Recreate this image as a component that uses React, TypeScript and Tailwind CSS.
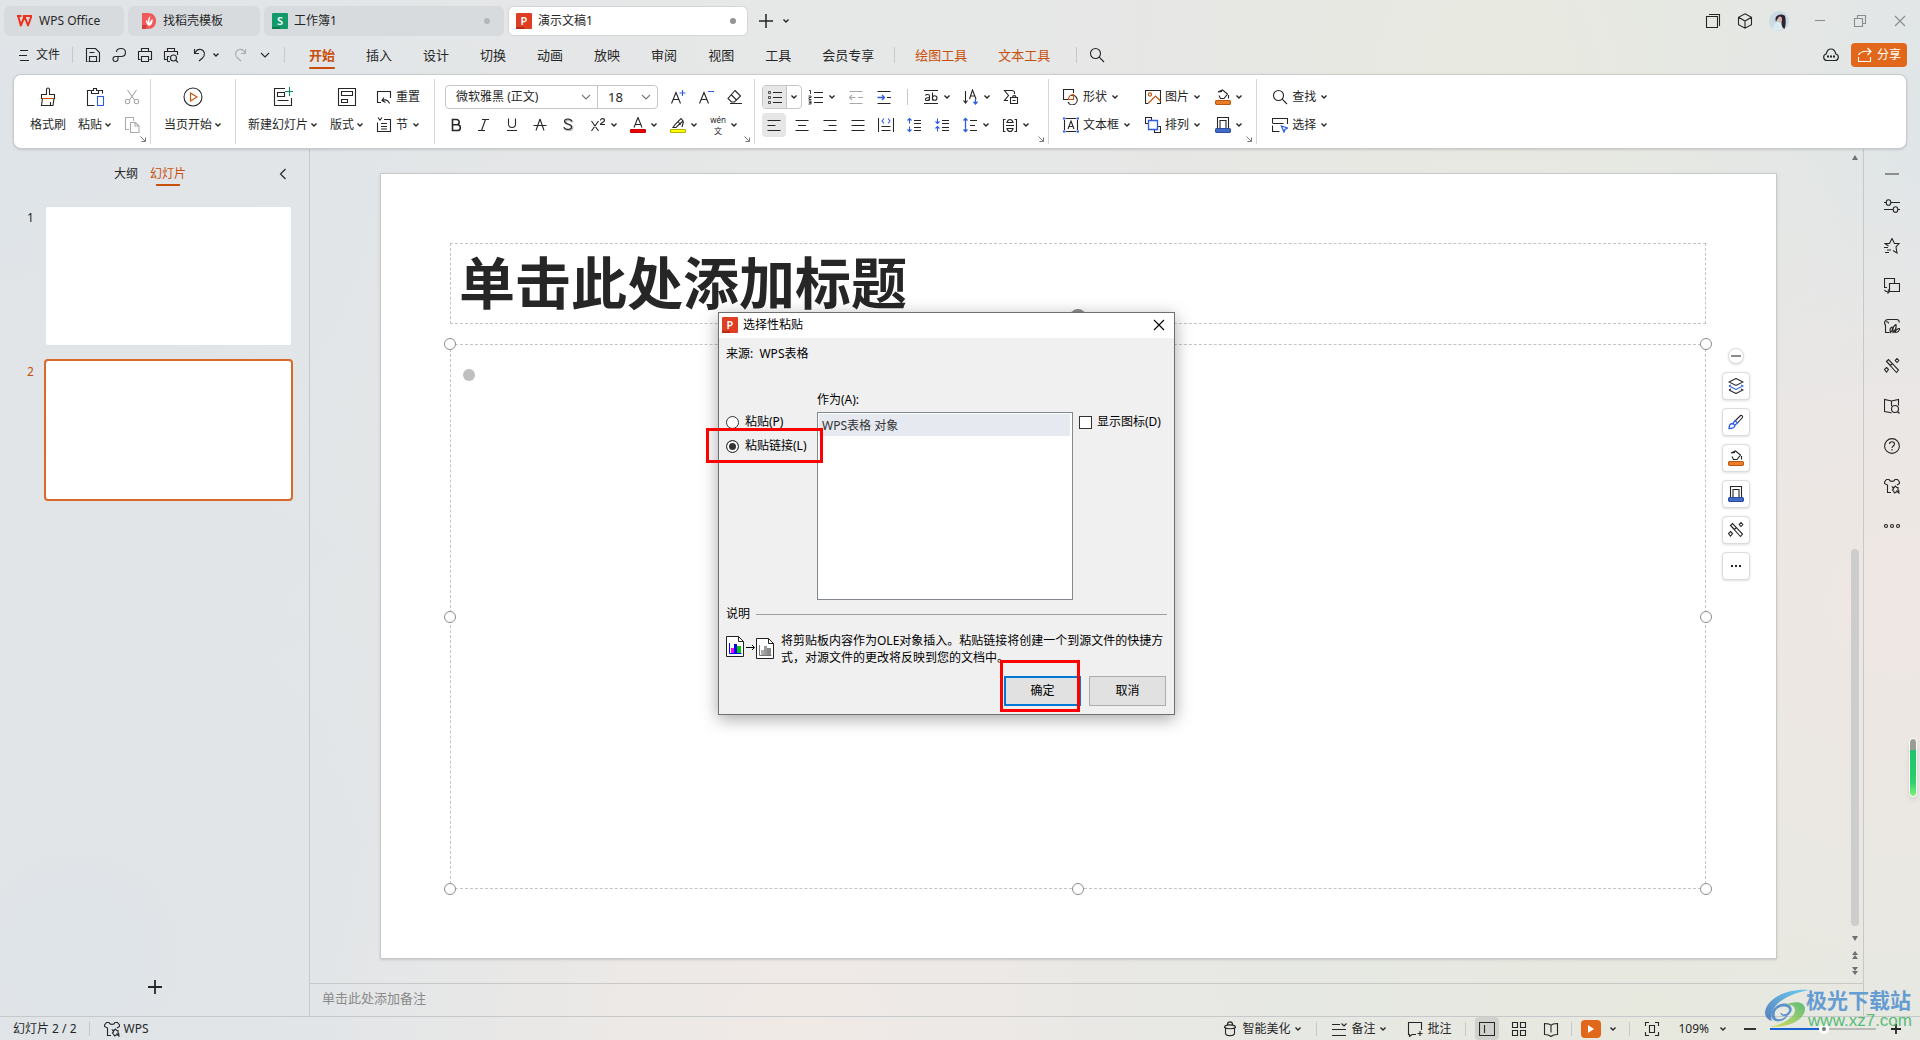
import type { ReactNode } from 'react'
import clsx from 'clsx'

const BLUE = '#2b5ce6'
const ORANGE = '#c8500a'

function Svg({ size = 16, box = 16, children }: { size?: number; box?: number; children: ReactNode }) {
  return (
    <svg
      width={size}
      height={size}
      viewBox={`0 0 ${box} ${box}`}
      fill="none"
      stroke="currentColor"
      strokeWidth="1.1"
      className="shrink-0"
      aria-hidden="true"
    >
      {children}
    </svg>
  )
}

function Caret() {
  return (
    <svg width="8" height="6" viewBox="0 0 8 6" fill="none" stroke="currentColor" strokeWidth="1.4" className="shrink-0">
      <path d="M1.5 1.5 4 4l2.500-2.500" />
    </svg>
  )
}

function Chevron() {
  return (
    <svg width="10" height="6" viewBox="0 0 10 6" fill="none" stroke="currentColor" strokeWidth="1.1" className="shrink-0">
      <path d="M1 1l4 4 4-4" />
    </svg>
  )
}

const icons = {
  save: (
    <Svg>
      <path d="M2.500 14.500h-1V1.500h9l4 4v9h-1M4.500 14.500v-5h7v5M4.500 5.500h5M3.500 14.500h9" />
    </Svg>
  ),
  exportPdf: (
    <Svg>
      <path d="M5.500 5c0-2 1.500-3.500 4.500-3.500s4.500 2 4.500 4-1.500 4-4.500 4H4.500a2.500 2.500 0 1 0 2.500 2.500V9.500" />
    </Svg>
  ),
  print: (
    <Svg>
      <path d="M4.500 4.500v-3h7v3M3.500 12.500h-2v-8h13v8h-2M4.500 9.500h7v5h-7z" />
    </Svg>
  ),
  preview: (
    <Svg>
      <path d="M4.500 4.500v-3h7v3M4 12.500H1.500v-8h13V8M4.500 14.500v-5h2M4.500 14.500H7" />
      <circle cx="10.500" cy="11" r="3" />
      <path d="M12.700 13.200 15 15.500" />
    </Svg>
  ),
  undo: (
    <Svg>
      <path d="M2.500 2v4.500H7M2.500 6.500C4 3.500 6.500 2 9 2.500c4 1 4.500 6 1.500 8.500L7 14" />
    </Svg>
  ),
  redo: (
    <Svg>
      <path d="M13.500 2v4.500H9M13.500 6.500C12 3.500 9.500 2 7 2.500c-4 1-4.500 6-1.500 8.500L9 14" />
    </Svg>
  ),
  search: (
    <Svg>
      <circle cx="6.500" cy="6.500" r="5" />
      <path d="M10.200 10.200 15 15" />
    </Svg>
  ),
  brush: (
    <Svg size={20} box={20}>
      <path d="M8.500 7.500v-5a1.500 1.500 0 0 1 3 0v5h5v4h-13v-4zM4.500 11.500l-1 7h11.500l1-7M12.500 15v3.500" />
      <path d="M4 11.500h12" stroke={ORANGE} />
    </Svg>
  ),
  paste: (
    <Svg size={20} box={20}>
      <path d="M6.500 3.500h-4v15h7M13.500 3.500h4v3M6.500 6.500v-3h2v-2h3v2h2v3z" />
      <path d="M12.500 9.500h6v9h-6z" stroke={BLUE} />
    </Svg>
  ),
  cut: (
    <Svg>
      <path d="M3.500 1l7 10M12.500 1l-7 10" />
      <circle cx="3.500" cy="12.500" r="2.200" />
      <circle cx="12.500" cy="12.500" r="2.200" />
    </Svg>
  ),
  copy: (
    <Svg>
      <path d="M5 12.500H1.500v-12h8V4M6.500 5.500h5l3.500 3.500v6.500H6.500zM11 5.500V9h4" />
    </Svg>
  ),
  play: (
    <Svg size={20} box={20}>
      <circle cx="10" cy="10" r="9" />
      <path d="M7.500 6v8l6.500-4z" stroke={ORANGE} />
    </Svg>
  ),
  newSlide: (
    <Svg size={20} box={20}>
      <path d="M12 1.500H1.500v17h17V11M4.500 5.500h7v4h-7zM4.500 13.500h11" />
      <path d="M16.500 0v9M12 4.500h8" stroke="#0a8a5a" />
    </Svg>
  ),
  layout: (
    <Svg size={20} box={20}>
      <path d="M1.500 1.500h17v17h-17zM4.500 4.500h11v4h-11zM4.500 12.500h6v3h-6z" />
    </Svg>
  ),
  reset: (
    <Svg>
      <path d="M5 13.500H1.500v-11h13V9M8 8.500l-2 3 3.500 2M6 11.500c4-1.500 6-.5 7.500 3" />
    </Svg>
  ),
  section: (
    <Svg>
      <path d="M2 .500 4 3l2-2.500M8 2.500h6.500v12h-13v-9M5 6.500h6M5 9.500h6M5 12h6" />
    </Svg>
  ),
  fontUp: (
    <Svg>
      <path d="M1.500 14.500 6 3.500l4.500 11M3 10.500h6" />
      <path d="M12.500 1v6M9.500 4h6" stroke={BLUE} />
    </Svg>
  ),
  fontDown: (
    <Svg>
      <path d="M1.500 14.500 6 3.500l4.500 11M3 10.500h6" />
      <path d="M10 2.500h6" stroke={BLUE} />
    </Svg>
  ),
  eraser: (
    <Svg>
      <path d="M9 1.500 14.500 7l-6 6H5.500L2 9.500zM5 5.500 10.500 11M4 14.500h12" />
    </Svg>
  ),
  bold: (
    <Svg>
      <path d="M4.500 2.500h4a2.600 2.600 0 0 1 0 5.300h-4zM4.500 7.800h5a2.800 2.800 0 0 1 0 5.700h-5z" strokeWidth="1.600" />
    </Svg>
  ),
  italic: (
    <Svg>
      <path d="M6 2.500h7M2 13.500h7M9.500 2.500l-4 11" />
    </Svg>
  ),
  underline: (
    <Svg>
      <path d="M4.500 1.500v5.500a3.500 3.500 0 0 0 7 0V1.500M3 13.500h10" />
    </Svg>
  ),
  strike: (
    <Svg>
      <path d="M8 2 4 13.500M8 2l4 11.500M1.500 8.500h13" />
    </Svg>
  ),
  shadow: (
    <Svg>
      <path d="M12.500 5.500c0-3-7-3.500-7-.5 0 3.500 7 2 7 5.500 0 3.500-7.500 3.500-7.500.5" stroke="#bbb" strokeWidth="2" />
      <path d="M11.500 4.500c0-3-7-3.500-7-.3 0 3.600 7 2 7 5.600 0 3.500-7.500 3.500-7.500.2" strokeWidth="1.200" />
    </Svg>
  ),
  superscript: (
    <Svg>
      <path d="M1.500 4l7 10M8.500 4l-7 10M10.500 3.500c0-2.500 4-2.500 4 0 0 1.500-4 2.500-4 4H15" />
    </Svg>
  ),
  fontColor: (
    <Svg>
      <path d="M4 10.500 8 .500l4 10M5.500 7.500h5" />
      <rect x="0.500" y="12.500" width="15" height="3" rx="1" fill="#f00000" stroke="#c00000" />
    </Svg>
  ),
  highlight: (
    <Svg>
      <path d="M3 10.500h3l7-6.500-2-2.500L5 7.500zM8.500 5l2 3M13.500 4.500 12 10" />
      <rect x="0.500" y="12.500" width="15" height="3" rx="1" fill="#ffff00" stroke="#b8b000" />
    </Svg>
  ),
  bullets: (
    <Svg>
      <path d="M6 3.500h9M6 8.500h9M6 13.500h9" />
      <path d="M1.500 2.500h2v2h-2zM1.500 7.500h2v2h-2zM1.500 12.500h2v2h-2z" strokeWidth="0.800" />
    </Svg>
  ),
  numbering: (
    <Svg>
      <path d="M6 3.500h9M6 8.500h9M6 13.500h9" />
      <path d="M1 1.500h1.500V5M.5 7h2.500v1.500H1v2h2.500M.5 12h2.500v3H.5M1 13.500h2" strokeWidth="0.900" />
    </Svg>
  ),
  outdent: (
    <Svg>
      <path d="M1.500 2.500h13M1.500 14.500h13M10 8.500h5M1.500 8.500h6M4 6 1.500 8.500 4 11" />
    </Svg>
  ),
  indent: (
    <Svg>
      <path d="M1.500 2.500h13M1.500 14.500h13M11 8.500h4" />
      <path d="M1.500 8.500h7M6 6l2.500 2.500L6 11" stroke={BLUE} strokeWidth="1.300" />
    </Svg>
  ),
  textAb: (
    <Svg>
      <path d="M1 1.500h14M1 14.500h14M2.500 6.500c.5-1.500 4-1.500 4 .5v4.500M6.500 8.500c-5 0-5 3-2.500 3 1.500 0 2.500-1 2.500-2M9.500 3.500v8" />
      <circle cx="11.700" cy="9" r="2.300" />
    </Svg>
  ),
  textDir: (
    <Svg>
      <path d="M2.500 2v12M.5 11.500l2 2.500 2-2.500M6.500 10l3-9 3.500 9M7.500 7h4.500" />
      <path d="M12.500 10v5M10.500 12.800l2 2.200 2-2.200" stroke={BLUE} strokeWidth="1.300" />
    </Svg>
  ),
  smart: (
    <Svg>
      <path d="M11.500 5V3.500c0-1-1-2-3-2h-7l4 5-4 5H5M7.500 8.500h7v6h-7zM9.500 8.500c0-2.500 3.500-2.500 3.500 0M9.500 11.500h3" />
    </Svg>
  ),
  alignLeft: (
    <Svg>
      <path d="M1.500 3.500h13M1.500 8.500h8M1.500 13.500h13" />
    </Svg>
  ),
  alignCenter: (
    <Svg>
      <path d="M1.500 3.500h13M4 8.500h8M1.500 13.500h13" />
    </Svg>
  ),
  alignRight: (
    <Svg>
      <path d="M1.500 3.500h13M6.500 8.500h8M1.500 13.500h13" />
    </Svg>
  ),
  alignJustify: (
    <Svg>
      <path d="M1.500 3.500h13M1.500 8.500h13M1.500 13.500h13" />
    </Svg>
  ),
  distribute: (
    <Svg>
      <path d="M.500 1v14M15.500 1v14M3.500 9.500h9M3.500 13.500h9" />
      <path d="M6 1.500 4 4l2 2.500M10 1.500 12 4l-2 2.500" stroke={BLUE} />
    </Svg>
  ),
  spacingUp: (
    <Svg>
      <path d="M8 3.500h7M8 6.500h7M8 10.500h7M8 13.500h7" />
      <path d="M3.500 6.500v-5M1.500 3.500l2-2 2 2M3.500 9.500v5M1.500 12.500l2 2 2-2" stroke={BLUE} />
    </Svg>
  ),
  spacingDown: (
    <Svg>
      <path d="M8 3.500h7M8 6.500h7M8 10.500h7M8 13.500h7" />
      <path d="M3.500 1.500v5M1.500 4.500l2 2 2-2M3.500 14.500v-5M1.500 11.500l2-2 2 2" stroke={BLUE} />
    </Svg>
  ),
  lineSpacing: (
    <Svg>
      <path d="M8 3.500h7M8 8.500h5M8 13.500h7" />
      <path d="M3.500 1.500v13M1.500 3.500l2-2 2 2M1.500 12.500l2 2 2-2" stroke={BLUE} strokeWidth="1.300" />
    </Svg>
  ),
  vertical: (
    <Svg>
      <path d="M3.500 2.500h-2v12h2M12.500 2.500h2v12h-2M4 8.500h8M5 5.500c1-4 5-4 6 0zM5 11.500c1 4 5 4 6 0z" />
    </Svg>
  ),
  shapes: (
    <Svg>
      <path d="M5 10.500H.500v-10h10V4M8 6.500a4.800 4.800 0 1 1-3 6.500" />
      <path d="M10.500 5.500v5h-5c0-3 2-5 5-5z" stroke={ORANGE} />
    </Svg>
  ),
  textbox: (
    <Svg>
      <path d="M3 1.500h10M3 14.500h10M1.500 3v10M14.500 3v10M5 12 8 4l3 8M6 9.500h4" />
      <path d="M0 1.500h2.500M0 14.500h2.500M13.500 1.500H16M13.500 14.500H16" stroke={BLUE} strokeWidth="2" />
    </Svg>
  ),
  picture: (
    <Svg>
      <path d="M12 14.500h3.500v-13H.500v13H3" />
      <path d="M3 14.500 10.500 7l5 5" stroke={ORANGE} />
      <circle cx="5" cy="5.500" r="1.600" stroke={ORANGE} />
    </Svg>
  ),
  arrange: (
    <Svg>
      <path d="M3 6.500H.500v-6h6V3M9.500 13v2.500h6v-6H13" />
      <path d="M3.500 3.500h9v9h-9z" stroke={BLUE} strokeWidth="1.300" />
    </Svg>
  ),
  fill: (
    <Svg>
      <path d="M3 3 7.500 1l5 4-3.500 4.500H5.500L4 6.500M3 3l4-.500M13.500 6v3.500" />
      <rect x="0.500" y="11.500" width="15" height="4" rx="1.500" fill="#ee7d26" stroke="#b55a14" />
    </Svg>
  ),
  outline: (
    <Svg>
      <path d="M2.500 11V.500h11V11M5 11V3.500h6V11" />
      <rect x="0.500" y="11.500" width="15" height="4" rx="1.500" fill="#3f6ac8" stroke="#2c4f9c" />
    </Svg>
  ),
  select: (
    <Svg>
      <path d="M.500 6V1.500h15V7M.500 6.500h11M7.500 14.500h-7v-6" />
      <path d="M9.500 9l6 2-2.500 1.500-1 2.500z" stroke={BLUE} strokeWidth="1.300" />
    </Svg>
  ),
  sliders: (
    <Svg>
      <path d="M0 4.500h2.500M7 4.500h9M0 11.500h9M14 11.500h2" />
      <ellipse cx="4.500" cy="4.500" rx="2.300" ry="2.800" />
      <ellipse cx="11.500" cy="11.500" rx="2.300" ry="2.800" />
    </Svg>
  ),
  star: (
    <Svg>
      <path d="M4.500 8 1 5.500h4.500L8 .500l2.500 5H15L12 9l1 6-4-2.500M0 9.500h4M3 12h4M1 14.500h4" />
    </Svg>
  ),
  swap: (
    <Svg>
      <path d="M3 9.500H.500v-9h10V5M5.500 5.500h10v8h-10zM.5 12c1 2 2.500 2 4.500 1.500M4 11.500l1.500 2-2 2" />
    </Svg>
  ),
  beautify: (
    <Svg>
      <path d="M5.500 14.500h-4V7C-.5 5 1 1.500 4 1.500h8.500c2 0 3 1.500 2.500 3M4.500 5.500C4.500 4 3.500 3.500 2 4M6.500 14.500c-1-3 0-5 1.500-5.500 1 2 0 4-1.500 5.500zM9 14.500c-.5-4 1-7 3-8 .5 3-.5 6-3 8zM11 14.500c1-3 2.500-4 4.500-4 0 2.500-2 4-4.500 4z" />
    </Svg>
  ),
  wand: (
    <Svg>
      <path d="M2.500 3.500 4.500 1.500 14.500 12l-2 2.500zM2.500 3.500l4 4 2-2" />
      <path d="M13 .500l1.800 2L13 4.500l-1.800-2zM2.500 9.500l2 2-2 2.500-2-2.500z" />
    </Svg>
  ),
  bookSearch: (
    <Svg>
      <path d="M6 14.500 .500 13.500v-12l7 1.500 7-1.500v6M7.500 3v5M6 14.500l1.500.500" />
      <circle cx="11" cy="11" r="3.500" />
      <path d="M13.500 13.500 15.500 15.500" />
    </Svg>
  ),
  help: (
    <Svg>
      <circle cx="8" cy="8" r="7.400" />
      <path d="M5.500 6c0-3 5-3 5 0 0 2-2.500 2-2.500 4M8 11v1.500" />
    </Svg>
  ),
  shirt: (
    <Svg>
      <path d="M7 14.500H3.500V7l-3-1.500V4l2-2.500H5c1 2.500 5 2.500 6 0h2.500l2 2.500v1.500L13 7" />
      <path d="M8.500 9l1.500.500 1.500-1.500 1.200 1.500H14v2l1 1.500-1.500 1-1.500 0-1.500 1-1-2-1-1 1-1zM12.500 12.500l3 3" />
    </Svg>
  ),
  more: (
    <Svg>
      <circle cx="2" cy="8" r="1.500" />
      <circle cx="8" cy="8" r="1.500" />
      <circle cx="14" cy="8" r="1.500" />
    </Svg>
  ),
  layers: (
    <Svg>
      <path d="M8 .500 15 4 8 7.500 1 4zM1 12l7 3.500 7-3.500-2-1M1 12l2-1" />
      <path d="M1 8l7 3.500L15 8l-2-1M1 8l2-1" stroke={BLUE} />
    </Svg>
  ),
  paint: (
    <Svg>
      <path d="M7.500 6.500 12.500 1.500a1.500 1.500 0 0 1 2 2L9.500 9" />
      <path d="M1 14.500C1 10 4 9.500 5 9.500L7 6.500 9.500 9 7 11c0 2-1.500 3.500-6 3.500zM5 9.500 7 11.500" stroke={BLUE} strokeWidth="1.300" />
    </Svg>
  ),
  dots: (
    <Svg>
      <path d="M3 8h2M7 8h2M11 8h2" strokeWidth="2" />
    </Svg>
  ),
  acorn: (
    <Svg>
      <path d="M2.500 6.500c0-3.500 11-3.500 11 0-3 1.500-8 1.500-11 0zM3.500 7v5c0 3.500 9 3.500 9 0V7M5.500 3.500c0-3.500 5-3.500 5 0" />
    </Svg>
  ),
  notes: (
    <Svg>
      <path d="M1 3.500h8M1 8.500h14M1 14.500h14M10.500 2.500 13 5l2.500-2.500" />
    </Svg>
  ),
  comment: (
    <Svg>
      <path d="M9 13.500H5l-2.500 2v-2h-1v-12h13V9M13 10v5M10.500 12.500h5" />
    </Svg>
  ),
  normalView: (
    <Svg>
      <path d="M.500 1.500h15v13H.500zM5.500 4v8" />
    </Svg>
  ),
  gridView: (
    <Svg>
      <path d="M1.500 1.500h5v5h-5zM9.500 1.500h5v5h-5zM1.500 9.500h5v5h-5zM9.500 9.500h5v5h-5z" />
    </Svg>
  ),
  book: (
    <Svg>
      <path d="M8 4.500C7 3 5 2.500 1.500 2.500v11c3 0 5 .5 6.500 2 1.500-1.500 3.500-2 6.500-2v-11C11 2.500 9 3 8 4.500v7" />
    </Svg>
  ),
  fit: (
    <Svg>
      <path d="M1.500 5V1.500H5M11 1.500h3.500V5M14.500 11v3.500H11M5 14.500H1.500V11M5.500 4.500h5v7h-5z" />
    </Svg>
  ),
}

type IconName = keyof typeof icons

const font = "font-['Noto_Sans','Noto_Sans_CJK_SC',sans-serif]"

function Tool({ icon, label, caret, wide, muted }: { icon: IconName; label: string; caret?: boolean; wide?: boolean; muted?: boolean }) {
  return (
    <button
      type="button"
      aria-label={label}
      className={clsx('flex h-6 shrink-0 items-center gap-1 whitespace-nowrap', muted && 'text-[#a9abad]')}
    >
      {icons[icon]}
      {wide && <span>{label}</span>}
      {caret && <Caret />}
    </button>
  )
}

function TallTool({ icon, label, caret }: { icon: IconName; label: string; caret?: boolean }) {
  return (
    <button type="button" className="flex shrink-0 flex-col items-center gap-1">
      <span className="flex h-6 items-center">{icons[icon]}</span>
      <span className="flex h-6 items-center gap-0.5 whitespace-nowrap">
        {label}
        {caret && <Caret />}
      </span>
    </button>
  )
}

function Group({ className, launcher, last, children }: { className?: string; launcher?: boolean; last?: boolean; children: ReactNode }) {
  return (
    <div className={clsx('relative my-1 flex shrink-0 items-start pt-1.5', !last && 'border-r border-[#d6d6d6]', className)}>
      {children}
      {launcher && (
        <svg width="6" height="6" viewBox="0 0 6 6" fill="none" stroke="#777" className="absolute right-1 bottom-0.5">
          <path d="M.5.500l4.500 4.500M5.500 1.500v4h-4" />
        </svg>
      )}
    </div>
  )
}

function Rule({ className }: { className?: string }) {
  return <span className={clsx('w-px shrink-0 bg-[#c6c8ca]', className)} />
}

function AppBadge({ letter, color, dark }: { letter: string; color: string; dark: string }) {
  return (
    <svg width="16" height="16" viewBox="0 0 16 16" className="shrink-0" aria-hidden="true">
      <rect width="16" height="16" rx="1" fill={color} />
      <path d="M0 14h8v2H1a1 1 0 0 1-1-1z" fill={dark} />
      <text x="8" y="12" textAnchor="middle" fontSize="11" fontWeight="600" fill="#fff" fontFamily="Noto Sans">
        {letter}
      </text>
    </svg>
  )
}

function TitleBar() {
  return (
    <header className="flex items-center pt-1.5 pr-3 pl-1">
      <div className="flex h-[30px] gap-1">
        <button type="button" className="flex w-[120px] items-center gap-[7px] rounded-md bg-[#d8dbde] pl-[13px]">
          <svg width="15" height="12" viewBox="0 0 15 12" fill="none" stroke="#f0301c" strokeWidth="2">
            <path d="M0 1.100h4.500M1.200 1l2.600 9.500 3.700-9M6 1.100h8.500L11 10.500 7.500 1.500" strokeLinejoin="round" />
          </svg>
          WPS Office
        </button>
        <button type="button" className="flex w-[132px] items-center gap-[7px] rounded-md bg-[#d8dbde] pl-3.5">
          <svg width="14" height="16" viewBox="0 0 14 16">
            <path d="M0 0h6c5 0 8 3.500 8 8s-3 8-8 8H0z" fill="#f05a5a" />
            <path d="M0 12h5l-1 4H0z" fill="#d43d3d" />
            <path d="M4 7c0 3 1 5 3 6 3-1 4-4 3.500-7C9 7 8 8.500 7.500 10 7 7 8 5 8.500 3 6 4.500 6 6.500 6 9 5.500 8 5 7.300 4 7z" fill="#fff" />
          </svg>
          找稻壳模板
        </button>
        <button type="button" className="flex w-60 items-center gap-1.5 rounded-md bg-[#d8dbde] px-2">
          <AppBadge letter="S" color="#139a6a" dark="#0a7a50" />
          工作簿1
          <span className="mr-1.5 ml-auto size-1.5 rounded-full bg-[#b4b6b8]" />
        </button>
        <button
          type="button"
          className="flex w-60 items-center gap-1.5 rounded-md border border-[#d3d5d7] bg-white px-[7px]"
        >
          <AppBadge letter="P" color="#e03e22" dark="#b52a14" />
          演示文稿1
          <span className="mr-1 ml-auto size-1.5 rounded-full bg-[#929496]" />
        </button>
      </div>
      <button type="button" aria-label="新建标签" className="ml-2.5">
        <Svg>
          <path d="M8 1v14M1 8h14" strokeWidth="1.500" />
        </Svg>
      </button>
      <button type="button" aria-label="标签列表" className="ml-2">
        <Caret />
      </button>

      <div className="ml-auto flex items-center">
        <button type="button" aria-label="窗口">
          <Svg>
            <path d="M1.500 3.500h11v11h-11zM4 1.500h10.500V13" />
          </Svg>
        </button>
        <button type="button" aria-label="应用" className="ml-4">
          <Svg>
            <path d="M8 .800 14.500 4.300v7.400L8 15.200l-6.500-3.500V4.300zM1.500 4.300 8 8l6.500-3.700M8 8v7" />
          </Svg>
        </button>
        <button type="button" aria-label="账户" className="ml-4">
          <svg width="20" height="20" viewBox="0 0 20 20">
            <circle cx="10" cy="10" r="10" fill="#cbd9e3" />
            <path d="M4 19c0-5 2-8 6-8 3 0 3 4 3 8z" fill="#dcebef" />
            <path d="M8 5c2-2 6-2 8 0 1 4 1 9-.5 13-2-1-3-3-3-6L12 7 9.500 7C8.500 7.500 8 9 7 11 6 8 6.500 6 8 5z" fill="#2c2430" />
            <ellipse cx="11" cy="8.500" rx="2" ry="3" fill="#dcb3a8" />
          </svg>
        </button>
        <div className="ml-[23px] flex gap-6 text-[#8a8c8e]">
          <button type="button" aria-label="最小化">
            <Svg>
              <path d="M3 7.500h10" />
            </Svg>
          </button>
          <button type="button" aria-label="还原">
            <Svg>
              <path d="M2.500 5.500h8v8h-8zM5.500 5.500v-3h8v8h-3" />
            </Svg>
          </button>
          <button type="button" aria-label="关闭">
            <Svg>
              <path d="M3 3l10 10M13 3 3 13" />
            </Svg>
          </button>
        </div>
      </div>
    </header>
  )
}

const menus = ['插入', '设计', '切换', '动画', '放映', '审阅', '视图', '工具', '会员专享']

function MenuBar() {
  return (
    <nav className="flex h-[38px] items-center pr-[13px] pl-[19px]">
      <button type="button" className="flex items-center gap-[7px]">
        <svg width="10" height="12" viewBox="0 0 10 12" stroke="currentColor" fill="none">
          <path d="M1 1.500h8M0 6.500h8M1 11.500h9" />
        </svg>
        文件
      </button>
      <Rule className="mx-3 h-4" />
      <div className="flex gap-2.5">
        <Tool icon="save" label="保存" />
        <Tool icon="exportPdf" label="输出为PDF" />
        <Tool icon="print" label="打印" />
        <Tool icon="preview" label="打印预览" />
      </div>
      <div className="ml-[13px] flex gap-3">
        <Tool icon="undo" label="撤销" caret />
        <Tool icon="redo" label="恢复" muted />
        <button type="button" aria-label="自定义">
          <Chevron />
        </button>
      </div>
      <Rule className="mr-6 ml-3.5 h-4" />
      <div className="flex gap-[31px] text-[13px]">
        <button type="button" className="relative h-6 font-bold text-[#c8500a]">
          开始
          <span className="absolute inset-x-0 -bottom-0.5 h-0.5 rounded-full bg-[#c8500a]" />
        </button>
        {menus.map((m) => (
          <button key={m} type="button">
            {m}
          </button>
        ))}
      </div>
      <Rule className="mx-5 h-4" />
      <div className="flex gap-[31px] text-[13px] text-[#c8500a]">
        <button type="button">绘图工具</button>
        <button type="button">文本工具</button>
      </div>
      <Rule className="mr-3 ml-[26px] h-4" />
      <Tool icon="search" label="搜索" />

      <button type="button" aria-label="云同步" className="mr-3 ml-auto">
        <Svg>
          <path d="M4 13.500A3.300 3.300 0 0 1 3.200 7C4 3.500 6 2 8 2s4 1.500 4.800 5a3.300 3.300 0 0 1-.8 6.500z" strokeWidth="1.200" />
          <path d="M4 9.500h2M7 9.500h2M10 9.500h2" strokeWidth="1.800" />
        </Svg>
      </button>
      <button type="button" className="flex h-6 w-14 items-center justify-center gap-1 rounded bg-[#e1681a] text-white">
        <Svg>
          <path d="M1.500 10v4.500h12V10M1.500 8C3 5 6 3.500 13.500 4.500M10.500 1l3.500 3.500L10.500 8" />
        </Svg>
        分享
      </button>
    </nav>
  )
}

function Ribbon() {
  return (
    <div className="relative z-10 mx-[13px] flex h-[75px] overflow-hidden rounded-lg border border-[#c9cbcc] bg-white shadow">
      <Group className="gap-3 pr-2.5 pl-4" launcher>
        <TallTool icon="brush" label="格式刷" />
        <TallTool icon="paste" label="粘贴" caret />
        <div className="flex flex-col gap-1">
          <Tool icon="cut" label="剪切" muted />
          <Tool icon="copy" label="复制" muted />
        </div>
      </Group>

      <Group className="px-[13px]">
        <TallTool icon="play" label="当页开始" caret />
      </Group>

      <Group className="gap-3 pr-3.5 pl-3">
        <TallTool icon="newSlide" label="新建幻灯片" caret />
        <TallTool icon="layout" label="版式" caret />
        <div className="flex flex-col gap-1">
          <Tool icon="reset" label="重置" wide />
          <Tool icon="section" label="节" wide caret />
        </div>
      </Group>

      <Group className="w-[320px] pl-2.5" launcher>
        <div className="flex flex-col gap-1">
          <div className="flex h-6 items-center">
            <div className="flex h-6 items-center rounded border border-[#c4c6c8]">
              <label className="relative flex w-[151px] items-center">
                <select aria-label="字体" className="w-full appearance-none pl-2.5">
                  <option>微软雅黑 (正文)</option>
                </select>
                <span className="pointer-events-none absolute right-1.5 text-[#777]">
                  <Chevron />
                </span>
              </label>
              <label className="relative flex h-full w-[60px] items-center border-l border-[#c4c6c8]">
                <select aria-label="字号" className="w-full appearance-none pl-2.5 text-[13px]">
                  <option>18</option>
                </select>
                <span className="pointer-events-none absolute right-1.5 text-[#777]">
                  <Chevron />
                </span>
              </label>
            </div>
            <div className="ml-3 flex gap-3">
              <Tool icon="fontUp" label="增大字号" />
              <Tool icon="fontDown" label="减小字号" />
              <Tool icon="eraser" label="清除格式" />
            </div>
          </div>
          <div className="flex pl-[3px]">
            <div className="flex gap-3">
              <Tool icon="bold" label="加粗" />
              <Tool icon="italic" label="倾斜" />
              <Tool icon="underline" label="下划线" />
              <Tool icon="strike" label="删除线" />
              <Tool icon="shadow" label="阴影" />
            </div>
            <div className="ml-3.5 flex gap-3">
              <Tool icon="superscript" label="上标" caret />
              <Tool icon="fontColor" label="字体颜色" caret />
              <Tool icon="highlight" label="突出显示" caret />
              <button type="button" aria-label="拼音指南" className="flex h-6 items-center gap-1">
                <span className="flex w-4 flex-col items-center text-[8px] leading-[11px]">
                  <span>wén</span>
                  <span>文</span>
                </span>
                <Caret />
              </button>
            </div>
          </div>
        </div>
      </Group>

      <Group className="w-[294px] pl-[7px]" launcher>
        <div className="flex flex-col gap-1">
          <div className="flex gap-3">
            <div className="flex gap-1.5">
              <div className="flex h-6 rounded border border-[#c4c6c8]">
                <button type="button" aria-label="项目符号" className="flex w-[23px] items-center justify-center rounded-l bg-[#e6e6e6]">
                  {icons.bullets}
                </button>
                <button type="button" aria-label="项目符号选项" className="flex w-[15px] items-center justify-center border-l border-[#c4c6c8]">
                  <Caret />
                </button>
              </div>
              <Tool icon="numbering" label="编号" caret />
            </div>
            <Tool icon="outdent" label="减少缩进" muted />
            <Tool icon="indent" label="增加缩进" />
            <Rule className="mx-[3px] my-1" />
            <Tool icon="textAb" label="字符边距" caret />
            <Tool icon="textDir" label="文字方向" caret />
            <Tool icon="smart" label="转智能图形" />
          </div>
          <div className="flex gap-3">
            <button type="button" aria-label="左对齐" className="-mr-1 flex size-6 items-center justify-center rounded bg-[#e6e6e6]">
              {icons.alignLeft}
            </button>
            <Tool icon="alignCenter" label="居中" />
            <Tool icon="alignRight" label="右对齐" />
            <Tool icon="alignJustify" label="两端对齐" />
            <Tool icon="distribute" label="分散对齐" />
            <Tool icon="spacingUp" label="增大段距" />
            <Tool icon="spacingDown" label="减小段距" />
            <Tool icon="lineSpacing" label="行距" caret />
            <Tool icon="vertical" label="对齐文本" caret />
          </div>
        </div>
      </Group>

      <Group className="gap-3.5 pr-[13px] pl-3.5" launcher>
        <div className="flex flex-col gap-1">
          <Tool icon="shapes" label="形状" wide caret />
          <Tool icon="textbox" label="文本框" wide caret />
        </div>
        <div className="flex flex-col gap-1">
          <Tool icon="picture" label="图片" wide caret />
          <Tool icon="arrange" label="排列" wide caret />
        </div>
        <div className="flex flex-col gap-1">
          <Tool icon="fill" label="填充" caret />
          <Tool icon="outline" label="轮廓" caret />
        </div>
      </Group>

      <Group className="pl-[15px]" last>
        <div className="flex flex-col gap-1">
          <Tool icon="search" label="查找" wide caret />
          <Tool icon="select" label="选择" wide caret />
        </div>
      </Group>
    </div>
  )
}

function SlidePane() {
  return (
    <aside className="flex w-[310px] shrink-0 flex-col border-r border-[#c6c8ca]">
      <div className="mt-[13px] flex h-6 items-center gap-3 pr-[22px] pl-[114px]">
        <button type="button">大纲</button>
        <button type="button" className="relative flex h-6 items-center text-[#c8500a]">
          幻灯片
          <span className="absolute inset-x-1.5 bottom-0 h-0.5 bg-[#c8500a]" />
        </button>
        <button type="button" aria-label="收起" className="ml-auto">
          <svg width="8" height="12" viewBox="0 0 8 12" fill="none" stroke="currentColor" strokeWidth="1.200">
            <path d="M6.500 1 1.500 6l5 5" />
          </svg>
        </button>
      </div>
      <ol className="mt-[19px] flex flex-col gap-3 pr-4">
        {[1, 2].map((n) => (
          <li key={n} className={clsx('flex', n === 2 && 'text-[#c8500a]')}>
            <span className="w-11 pt-1 pl-[27px]">{n}</span>
            <button
              type="button"
              aria-label={`幻灯片 ${n}`}
              className={clsx(
                'aspect-[249/142] flex-1 rounded border-2 bg-white bg-clip-padding',
                n === 2 ? 'border-[#d9692a]' : 'border-transparent'
              )}
            />
          </li>
        ))}
      </ol>
      <button type="button" aria-label="新建幻灯片" className="mt-auto flex h-[58px] items-center justify-center">
        <Svg>
          <path d="M8 1v14M1 8h14" strokeWidth="1.800" />
        </Svg>
      </button>
    </aside>
  )
}

function Handle({ className }: { className: string }) {
  return <span className={clsx('absolute size-3 rounded-full border border-[#8c8c8c] bg-white', className)} />
}

const quickTools: IconName[] = ['layers', 'paint', 'fill', 'outline', 'wand', 'dots']
const quickLabels = ['图层', '样式', '填充', '轮廓', '美化', '更多']

function Slide() {
  return (
    <section className="relative flex flex-1 flex-col gap-5 border border-[#c8c9ca] bg-white py-[69px] pr-[70px] pl-[69px] shadow-sm">
      <div className="flex h-[81px] shrink-0 items-center border border-dashed border-[#c4c4c4] pb-1 pl-2">
        <h1 className="text-[56px] leading-none font-bold whitespace-nowrap text-[#262626]">单击此处添加标题</h1>
      </div>
      <div className="relative flex-1 border border-dashed border-[#c4c4c4] pt-6 pl-3">
        <span className="block size-3 rounded-full bg-[#bfbfbf]" />
        <span className="absolute -top-9 left-1/2 -ml-2 size-4 rounded-full bg-[#8c8c8c]" />
        <Handle className="-top-[7px] -left-[7px]" />
        <Handle className="-top-[7px] -right-[7px]" />
        <Handle className="top-1/2 -left-[7px] -mt-1.5" />
        <Handle className="top-1/2 -right-[7px] -mt-1.5" />
        <Handle className="-bottom-[7px] -left-[7px]" />
        <Handle className="-right-[7px] -bottom-[7px]" />
        <Handle className="-bottom-[7px] left-1/2 -ml-1.5" />
      </div>
      {/* floating quick tools next to the placeholder */}
      <div className="absolute top-[174px] right-[26px] flex flex-col items-center gap-2">
        <button
          type="button"
          aria-label="收起工具"
          className="flex size-4 items-center justify-center rounded-full border border-[#dcdcdc] bg-white shadow"
        >
          <span className="h-0.5 w-2.5 bg-[#8a8a8a]" />
        </button>
        {quickTools.map((t, i) => (
          <button
            key={t}
            type="button"
            aria-label={quickLabels[i]}
            className="flex size-7 items-center justify-center rounded border border-[#dcdcdc] bg-white shadow"
          >
            {icons[t]}
          </button>
        ))}
      </div>
    </section>
  )
}

function ScrollBar() {
  return (
    <div className="flex w-[18px] flex-col items-center pl-0.5">
      <svg width="6" height="5" viewBox="0 0 6 5" className="mt-1.5" fill="#6e7072">
        <path d="M3 0l3 5H0z" />
      </svg>
      <div className="mt-[389px] w-2 flex-1 rounded-full bg-[#cdcecb]" />
      <svg width="6" height="5" viewBox="0 0 6 5" className="mt-2.5" fill="#6e7072">
        <path d="M3 5 0 0h6z" />
      </svg>
      <svg width="6" height="8" viewBox="0 0 6 8" className="mt-2.5" fill="#6e7072">
        <path d="M3 0l3 4H0zM3 4l3 4H0z" />
      </svg>
      <svg width="6" height="8" viewBox="0 0 6 8" className="mt-2 mb-2" fill="#6e7072">
        <path d="M3 4 0 0h6zM3 8 0 4h6z" />
      </svg>
    </div>
  )
}

const sideTools: [IconName, string][] = [
  ['sliders', '属性'],
  ['star', '动画'],
  ['swap', '切换'],
  ['beautify', '美化'],
  ['wand', '魔法'],
  ['bookSearch', '素材'],
  ['help', '帮助'],
  ['shirt', '皮肤'],
  ['more', '更多'],
]

function SideBar() {
  return (
    <aside className="flex w-[57px] shrink-0 flex-col items-center gap-6 border-l border-[#c6c8ca] pt-6">
      <span className="-mb-px h-0.5 w-3.5 bg-[#8c8e90]" />
      {sideTools.map(([icon, label]) => (
        <button key={icon} type="button" aria-label={label}>
          {icons[icon]}
        </button>
      ))}
    </aside>
  )
}

function ChartPage({ x, bars }: { x: number; bars: string[] }) {
  return (
    <g>
      <path d={`M${x + 0.5} .5h12l5 5v15h-17z`} fill="#fff" stroke="#222" />
      <path d={`M${x + 12.5} .5v5h5`} fill="none" stroke="#222" />
      <path d={`M${x + 3.5} 7v10.500h12`} fill="none" stroke={bars[3]} />
      <rect x={x + 5} y="12" width="3" height="5" fill={bars[0]} />
      <rect x={x + 8} y="8" width="3" height="9" fill={bars[1]} />
      <rect x={x + 11} y="10" width="4" height="7" fill={bars[2]} />
    </g>
  )
}

function PasteSpecialDialog() {
  return (
    <div
      role="dialog"
      aria-label="选择性粘贴"
      className="absolute top-[312px] left-[718px] z-20 w-[457px] border border-[#6f6f6f] bg-[#f0f0f0] text-black shadow-[0_4px_16px_rgba(0,0,0,0.35)]"
    >
      <div className="flex h-[25px] items-center bg-white pr-2 pb-px pl-[3px]">
        <AppBadge letter="P" color="#e03e22" dark="#b52a14" />
        <h2 className="ml-[5px]">选择性粘贴</h2>
        <button type="button" aria-label="关闭" className="ml-auto">
          <Svg size={14} box={14}>
            <path d="M2 2l10 10M12 2 2 12" />
          </Svg>
        </button>
      </div>

      <div className="px-[7px] pt-[7px] pb-2">
        <p>来源:&nbsp; WPS表格</p>

        <div className="mt-7 flex">
          <fieldset className="flex w-[91px] flex-col pt-[19px]">
            <label className="flex h-6 items-center gap-1.5 whitespace-nowrap">
              <input
                type="radio"
                name="mode"
                className="size-[13px] shrink-0 appearance-none rounded-full border border-[#333] bg-white checked:bg-[#333] checked:shadow-[inset_0_0_0_2px_#fff]"
              />
              粘贴(P)
            </label>
            <label className="flex h-6 items-center gap-1.5 whitespace-nowrap">
              <input
                type="radio"
                name="mode"
                defaultChecked
                className="size-[13px] shrink-0 appearance-none rounded-full border border-[#333] bg-white checked:bg-[#333] checked:shadow-[inset_0_0_0_2px_#fff]"
              />
              粘贴链接(L)
            </label>
          </fieldset>
          <div className="w-64">
            <p id="paste-as">作为(A):</p>
            <div
              role="listbox"
              aria-labelledby="paste-as"
              className="mt-[3px] h-[188px] border border-[#828790] bg-white p-px pr-0.5"
            >
              <button
                type="button"
                role="option"
                aria-selected="true"
                className="flex h-[22px] w-full items-center bg-[#e6e9ef] pt-px pl-[3px] text-[#333]"
              >
                WPS表格 对象
              </button>
            </div>
          </div>
          <label className="mt-[19px] ml-1.5 flex h-6 items-center gap-[5px] whitespace-nowrap">
            <input type="checkbox" className="size-[13px] shrink-0 appearance-none border border-[#333] bg-white" />
            显示图标(D)
          </label>
        </div>

        <div className="mt-[5px] flex items-center gap-1.5">
          <h3>说明</h3>
          <hr className="flex-1 border-[#a0a0a0]" />
        </div>

        <div className="mt-[9px] flex gap-1.5">
          <svg width="49" height="24" viewBox="0 0 49 24" className="mt-1 shrink-0">
            <ChartPage x={0} bars={['#f0f', '#00f', '#0c0', '#00f']} />
            <path d="M20 11.500h8M26 9l2.500 2.500L26 14" fill="none" stroke="#000" />
            <g transform="translate(0 2)">
              <ChartPage x={30} bars={['#aaa', '#999', '#888', '#777']} />
            </g>
          </svg>
          <p className="leading-[17px]">
            将剪贴板内容作为OLE对象插入。粘贴链接将创建一个到源文件的快捷方式，对源文件的更改将反映到您的文档中。
          </p>
        </div>

        <div className="mt-2.5 flex justify-end gap-2 pr-px">
          <button type="button" className="h-[30px] w-[77px] border-2 border-[#0078d7] bg-[#e1e1e1]">
            确定
          </button>
          <button type="button" className="h-[30px] w-[77px] border border-[#adadad] bg-[#e1e1e1]">
            取消
          </button>
        </div>
      </div>

      {/* red marks round the two steps */}
      <span className="absolute top-[115px] -left-[13px] h-[35px] w-[117px] border-3 border-[#f00]" />
      <span className="absolute right-[94px] bottom-0.5 h-[52px] w-20 border-3 border-[#f00]" />
    </div>
  )
}

function StatusBar() {
  return (
    <footer className="flex h-6 items-center border-t border-[#c6c8ca] pr-[18px] pl-[13px]">
      <span>幻灯片 2 / 2</span>
      <Rule className="mr-3.5 ml-3 h-3.5" />
      <Tool icon="shirt" label="WPS" wide />

      <div className="ml-auto flex h-full items-center">
        <Tool icon="acorn" label="智能美化" wide caret />
        <Rule className="mx-3.5 h-3.5" />
        <Tool icon="notes" label="备注" wide caret />
        <span className="w-5" />
        <Tool icon="comment" label="批注" wide />
        <Rule className="mr-[9px] ml-3.5 h-3.5" />
        <button type="button" aria-label="普通视图" className="flex h-full w-6 items-center justify-center rounded bg-[#d0d1cd]">
          {icons.normalView}
        </button>
        <div className="mx-3 flex gap-4">
          <Tool icon="gridView" label="幻灯片浏览" />
          <Tool icon="book" label="阅读视图" />
        </div>
        <Rule className="mr-[9px] h-3.5" />
        <button type="button" aria-label="放映" className="mr-2 flex h-[18px] w-5 items-center justify-center rounded-sm bg-[#e1681a]">
          <svg width="6" height="8" viewBox="0 0 6 8" fill="#fff">
            <path d="M0 0l6 4-6 4z" />
          </svg>
        </button>
        <Caret />
        <Rule className="mr-3.5 ml-3 h-3.5" />
        <Tool icon="fit" label="最佳显示比例" />
        <button type="button" className="ml-[18px] flex items-center gap-2.5">
          109%
          <Caret />
        </button>
        <button type="button" aria-label="缩小" className="ml-[17px] h-0.5 w-3 bg-[#333]" />
        <input
          type="range"
          aria-label="显示比例"
          defaultValue={51}
          className="mx-3.5 h-0.5 w-[106px] appearance-none bg-[linear-gradient(to_right,#1a62d2_50%,#b9bbb8_50%)] [&::-webkit-slider-thumb]:size-2.5 [&::-webkit-slider-thumb]:appearance-none [&::-webkit-slider-thumb]:rounded-full [&::-webkit-slider-thumb]:border-3 [&::-webkit-slider-thumb]:border-white [&::-webkit-slider-thumb]:bg-[#777]"
        />
        <button type="button" aria-label="放大">
          <Svg size={12} box={12}>
            <path d="M6 1v10M1 6h10" strokeWidth="1.800" />
          </Svg>
        </button>
      </div>
    </footer>
  )
}

function Watermark() {
  return (
    <div className="pointer-events-none absolute right-2 bottom-2.5 z-20 flex items-center opacity-85">
      <svg width="46" height="40" viewBox="0 0 46 40" className="-mr-1">
        <defs>
          <linearGradient id="swirlBlue" x1="0" y1="1" x2="1" y2="0">
            <stop offset="0" stopColor="#3f6fb8" />
            <stop offset="1" stopColor="#56c8f0" />
          </linearGradient>
          <linearGradient id="swirlGreen" x1="0" y1="1" x2="1" y2="0">
            <stop offset="0" stopColor="#d8dc4a" />
            <stop offset="1" stopColor="#45b56a" />
          </linearGradient>
        </defs>
        <path d="M45 1C26-1 3 8 1 23c0 5 3 8 7 9-4-9 5-25 37-31z" fill="url(#swirlBlue)" />
        <path
          d="M11 29c-3-6 2-12 9-12 5 0 7 4 4 7-2 2-6 3-7 0 0 3 5 4 8 1 5-5 1-11-6-10-8 1-14 9-10 15 4 4 12 1 14-3-4 4-9 5-12 2z"
          fill="#4583c8"
          stroke="#4583c8"
        />
        <path d="M22 16c6-4 18-4 19 3 1 9-12 20-36 19 12-2 26-9 26-17 0-3-3-6-9-5z" fill="url(#swirlGreen)" />
      </svg>
      <div className="flex flex-col">
        <span className="text-[21px] leading-[24px] font-bold text-[#4f8fd0]">极光下载站</span>
        <span className="pl-0.5 font-['Liberation_Sans',sans-serif] text-[17px] leading-[18px] font-medium text-[#3fb566]">
          www.xz7.com
        </span>
      </div>
    </div>
  )
}

export default function App() {
  return (
    <div
      className={clsx(
        font,
        'relative flex h-screen flex-col overflow-hidden text-[12px] leading-[18px] text-[#262626]',
        'bg-[#e6e7e7] bg-[radial-gradient(circle_at_78%_6%,#e8e9e0_0%,transparent_26%),radial-gradient(circle_at_99%_58%,#efe7e3_0%,transparent_22%),radial-gradient(circle_at_86%_98%,#e7e9df_0%,transparent_34%),radial-gradient(circle_at_42%_100%,#f0eae6_0%,transparent_32%),radial-gradient(circle_at_0%_15%,#dfe4e8_0%,transparent_36%),radial-gradient(circle_at_4%_92%,#dfe4e8_0%,transparent_30%),radial-gradient(circle_at_99%_12%,#dfe5e8_0%,transparent_18%)]'
      )}
    >
      <TitleBar />
      <MenuBar />
      <Ribbon />
      <div className="flex min-h-0 flex-1">
        <SlidePane />
        <main className="flex min-w-0 flex-1 flex-col">
          <div className="flex min-h-0 flex-1">
            <div className="flex flex-1 pt-6 pr-[68px] pb-6 pl-[70px]">
              <Slide />
            </div>
            <ScrollBar />
          </div>
          <div className="flex h-[33px] shrink-0 items-center border-t border-[#c9c9c8] pb-1 pl-3 text-[13px] text-[#8a8a8a]">
            单击此处添加备注
          </div>
        </main>
        <SideBar />
      </div>
      <StatusBar />
      <PasteSpecialDialog />
      <div className="absolute right-[3px] bottom-[243px] h-[59px] w-2 rounded-full border border-white bg-[linear-gradient(#9a9a96_20%,#1fc46c_20%,#2ccf68_75%,#7ff07a)] shadow-md" />
      <Watermark />
    </div>
  )
}
